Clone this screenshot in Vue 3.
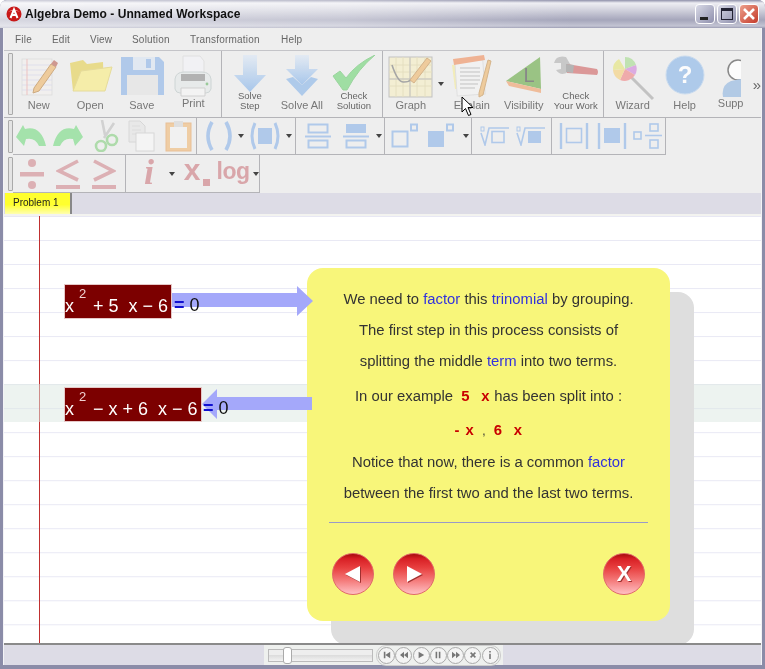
<script setup>
const transport = ['first', 'rew', 'play', 'pause', 'fwd', 'stop', 'info']
</script>

<template>
  <div class="window">
    <header class="titlebar">
      <svg class="app-logo" width="16" height="16" viewBox="0 0 16 16">
        <circle cx="8" cy="8" r="7.5" fill="#c81818" />
        <path d="M2 6 Q8 1 14 6 Q8 3.5 2 6Z" fill="#f08a8a" />
        <path d="M4.5 12 L8 3.5 L11.5 12 M6 9 H10" fill="none" stroke="#fff" stroke-width="2" />
      </svg>
      <span class="title">Algebra Demo - Unnamed Workspace</span>
      <div class="win-buttons">
        <div class="win-btn"><span class="min-mark"></span></div>
        <div class="win-btn"><span class="max-mark"></span></div>
        <div class="win-btn close">
          <svg width="14" height="14" viewBox="0 0 14 14"><path d="M2 2 L12 12 M12 2 L2 12" stroke="#fff" stroke-width="2.6" /></svg>
        </div>
      </div>
    </header>

    <div class="body">
      <nav class="menu">
        <span style="width:37px">File</span>
        <span style="width:38px">Edit</span>
        <span style="width:42px">View</span>
        <span style="width:58px">Solution</span>
        <span style="width:91px">Transformation</span>
        <span>Help</span>
      </nav>

      <!-- main toolbar -->
      <div class="bar bar-main">
        <i class="grip"></i>
        <div class="group g-file">
          <div class="tool">
            <svg width="42" height="42" viewBox="0 0 42 42">
              <rect x="4" y="4" width="30" height="36" fill="#f2f0ee" stroke="#ddd" />
              <path d="M4 10H34M4 15H34M4 20H34M4 25H34M4 30H34M4 35H34" stroke="#dcdcec" />
              <path d="M9 4V40" stroke="#eebbbb" />
              <path d="M16 33 L33 9 L38 12 L21 36 L15 38Z" fill="#eec58e" stroke="#c8a070" />
              <path d="M33 9 L38 12 L40 8 L36 5Z" fill="#c98a80" />
            </svg>
            <span>New</span>
          </div>
          <div class="tool">
            <svg width="46" height="42" viewBox="0 0 46 42">
              <path d="M3 8 L16 5 L20 9 L36 7 L37 36 L6 36Z" fill="#e8d87a" />
              <path d="M6 36 L14 16 L45 12 L38 36Z" fill="#f7ed9e" stroke="#e4d88c" />
            </svg>
            <span>Open</span>
          </div>
          <div class="tool">
            <svg width="46" height="42" viewBox="0 0 46 42">
              <path d="M2 2H40L45 7V40H2Z" fill="#a6c3ea" />
              <rect x="14" y="2" width="22" height="13" fill="#dfe8f2" />
              <rect x="27" y="4" width="5" height="9" fill="#a6c3ea" />
              <rect x="8" y="20" width="31" height="20" fill="#e6e6e6" />
            </svg>
            <span>Save</span>
          </div>
          <div class="tool">
            <svg width="42" height="42" viewBox="0 0 42 42">
              <path d="M11 1H28L32 6V18H11Z" fill="#f2f2f6" stroke="#ddd" />
              <path d="M3 24 Q4 17 12 17H30 Q38 17 39 24V34 Q38 38 34 38H8 Q4 38 3 34Z" fill="#e6eaea" stroke="#c8d0d0" />
              <rect x="9" y="19" width="24" height="7" fill="#a8a8a8" />
              <path d="M9 33H33V41H9Z" fill="#f4f4f4" stroke="#ccc" />
              <circle cx="35" cy="29" r="1.4" fill="#8cc48c" />
            </svg>
            <span class="up">Print</span>
          </div>
        </div>
        <div class="group g-solve">
          <div class="tool small">
            <svg width="34" height="38" viewBox="0 0 34 38">
              <defs><linearGradient id="blue" x1="0" y1="0" x2="0" y2="1"><stop offset="0" stop-color="#e2eaf4" /><stop offset="1" stop-color="#9cc0ea" /></linearGradient></defs>
              <path d="M10 0H24V20H33L17 37L1 20H10Z" fill="url(#blue)" />
            </svg>
            <span>Solve<br />Step</span>
          </div>
          <div class="tool">
            <svg width="34" height="41" viewBox="0 0 34 41">
              <path d="M10 0H24V14H33L17 30L1 14H10Z" fill="url(#blue)" />
              <path d="M8 22 L17 30 L26 22 L33 24 L17 41 L1 24Z" fill="#a4c4ea" />
            </svg>
            <span>Solve All</span>
          </div>
          <div class="tool small">
            <svg width="44" height="36" viewBox="0 0 44 36">
              <path d="M1 21 L8 16 L14 23 Q24 9 43 0 Q26 14 15 35 L11 35Z" fill="#92dc96" stroke="#8ccf90" />
            </svg>
            <span>Check<br />Solution</span>
          </div>
        </div>
        <div class="group g-view">
          <div class="tool">
            <svg width="46" height="44" viewBox="0 0 46 44">
              <rect x="1" y="2" width="43" height="40" fill="#f4efcf" stroke="#bbb" />
              <path d="M8 2V42M15 2V42M22 2V42M29 2V42M37 2V42M1 10H44M1 17H44M1 24H44M1 31H44" stroke="#e4dcb8" />
              <path d="M22 2V42M1 24H44" stroke="#bbb" />
              <path d="M4 10 Q10 28 16 27 Q21 27 24 24" fill="none" stroke="#999" stroke-width="1.6" />
              <path d="M22 25 L39 3 L43 6 L26 28Z" fill="#eec58e" stroke="#d0aa7a" />
            </svg>
            <span>Graph</span>
          </div>
          <b class="caret graph-caret"></b>
          <div class="tool">
            <svg width="42" height="44" viewBox="0 0 42 44">
              <path d="M1 10L8 9L10 34L4 34Z" fill="#f3ecb0" />
              <rect x="5" y="6" width="28" height="34" fill="#f2f2f2" stroke="#ddd" transform="rotate(-4 19 23)" />
              <path d="M2 4 L33 0 L34 5 L3 10Z" fill="#f0a884" />
              <path d="M9 13H29M9 17H29M9 21H29M9 25H29M9 29H27M9 33H24" stroke="#bbb" />
              <path d="M28 38 L37 5 L40 6 L32 40 L28 42Z" fill="#eec58e" stroke="#d0aa7a" />
            </svg>
            <span>Explain</span>
          </div>
          <div class="tool">
            <svg width="38" height="42" viewBox="0 0 38 42">
              <path d="M1 26 L35 2 L36 34Z" fill="#8cbc72" />
              <path d="M1 26 L36 34 L36 38 L4 31Z" fill="#f0b48c" />
              <text x="24" y="27" class="svg-l">L</text>
            </svg>
            <span>Visibility</span>
          </div>
          <div class="tool small">
            <svg width="46" height="28" viewBox="0 0 46 28">
              <path d="M13 2 Q3 0 1 8 L8 8 L8 14 L3 15 Q8 22 15 17 L20 14Z" fill="#c2c2c2" />
              <path d="M14 9 L44 14 Q46 17 44 20 L14 18Z" fill="#d88a8a" />
              <path d="M13 9 L21 10 L20 18 L13 17Z" fill="#aaa" />
            </svg>
            <span>Check<br />Your Work</span>
          </div>
        </div>
        <div class="group g-help">
          <div class="tool">
            <svg width="44" height="46" viewBox="0 0 44 46">
              <path d="M14 16 L42 44" stroke="#bbb" stroke-width="3" />
              <circle cx="14" cy="14" r="11" fill="#eee" />
              <path d="M14 14 L14 2 A12 12 0 0 1 25 10Z" fill="#b8e0a8" />
              <path d="M14 14 L25 10 A12 12 0 0 1 24 20Z" fill="#d8a0e0" />
              <path d="M14 14 L24 20 A12 12 0 0 1 9 25Z" fill="#f0a0a0" />
              <path d="M14 14 L9 25 A12 12 0 0 1 2 15Z" fill="#f4d898" />
              <path d="M14 14 L2 15 A12 12 0 0 1 8 4Z" fill="#e8e898" />
            </svg>
            <span>Wizard</span>
          </div>
          <div class="tool">
            <svg width="40" height="40" viewBox="0 0 40 40">
              <circle cx="20" cy="20" r="19" fill="#a4c4ea" stroke="#c4d8ee" />
              <text x="20" y="28" class="svg-q">?</text>
            </svg>
            <span>Help</span>
          </div>
          <div class="tool supp">
            <svg width="20" height="44" viewBox="0 0 20 44">
              <circle cx="17" cy="15" r="10" fill="#fff" stroke="#777" stroke-width="1.5" />
              <path d="M2 42 Q0 30 10 26 L20 24 V42Z" fill="#a8c4e4" />
            </svg>
            <span class="up">Supp</span>
          </div>
          <span class="more">»</span>
        </div>
      </div>

      <!-- transformation toolbar -->
      <div class="bar bar-tall">
        <i class="grip"></i>
        <div class="group g-edit">
          <div class="ico" style="width:36px">
            <svg width="32" height="22" viewBox="0 0 32 22"><path d="M1 12 L9 21 L11 14 Q20 12 24 21 H31 Q26 0 10 4 L8 0Z" fill="#98e0a0" /></svg>
          </div>
          <div class="ico" style="width:38px">
            <svg width="32" height="22" viewBox="0 0 32 22"><path d="M31 12 L23 21 L21 14 Q12 12 8 21 H1 Q6 0 22 4 L24 0Z" fill="#98e0a0" /></svg>
          </div>
          <div class="ico" style="width:36px">
            <svg width="30" height="32" viewBox="0 0 30 32">
              <path d="M12 0 L15 15 M24 3 L14 18" stroke="#ccc" stroke-width="2.6" />
              <circle cx="22" cy="20" r="5" fill="none" stroke="#a4d8a0" stroke-width="2.6" />
              <circle cx="11" cy="26" r="5" fill="none" stroke="#a4d8a0" stroke-width="2.6" />
            </svg>
          </div>
          <div class="ico" style="width:36px">
            <svg width="28" height="32" viewBox="0 0 28 32">
              <path d="M2 1H13L18 6V22H2Z" fill="#e8e8e8" stroke="#d4d4d4" />
              <path d="M5 6H13M5 10H14M5 14H14" stroke="#d8d8d8" />
              <rect x="9" y="13" width="18" height="18" fill="#f6f6f6" stroke="#d4d4d4" />
            </svg>
          </div>
          <div class="ico" style="width:38px">
            <svg width="27" height="32" viewBox="0 0 27 32">
              <rect x="1" y="3" width="25" height="28" fill="#f0c898" stroke="#e8b888" />
              <rect x="5" y="7" width="17" height="21" fill="#f2f2f2" />
              <rect x="9" y="1" width="9" height="6" fill="#ddd" />
            </svg>
          </div>
        </div>
        <div class="group g-paren">
          <div class="ico" style="width:37px">
            <svg width="28" height="30" viewBox="0 0 28 30">
              <path d="M7 1 Q-1 15 7 29 M21 1 Q29 15 21 29" fill="none" stroke="#a6c3ea" stroke-width="3.6" />
            </svg>
          </div>
          <b class="caret"></b>
          <div class="ico" style="width:40px">
            <svg width="32" height="28" viewBox="0 0 32 28">
              <path d="M6 1 Q0 14 6 27 M26 1 Q32 14 26 27" fill="none" stroke="#a6c3ea" stroke-width="3" />
              <rect x="9" y="6" width="14" height="16" fill="#a6c3ea" />
            </svg>
          </div>
          <b class="caret"></b>
        </div>
        <div class="group g-frac">
          <div class="ico" style="width:38px">
            <svg width="28" height="26" viewBox="0 0 28 26"><rect x="4.5" y="1.5" width="19" height="8" fill="none" stroke="#a6c3ea" stroke-width="2" /><rect x="4.5" y="17.5" width="19" height="7" fill="none" stroke="#a6c3ea" stroke-width="2" /><path d="M1 13.5H27" stroke="#a6c3ea" stroke-width="2" /></svg>
          </div>
          <div class="ico" style="width:38px">
            <svg width="28" height="26" viewBox="0 0 28 26"><rect x="4" y="1" width="20" height="9" fill="#a6c3ea" /><rect x="4.5" y="17.5" width="19" height="7" fill="none" stroke="#a6c3ea" stroke-width="2" /><path d="M1 13.5H27" stroke="#a6c3ea" stroke-width="2" /></svg>
          </div>
          <b class="caret"></b>
        </div>
        <div class="group g-pow">
          <div class="ico" style="width:36px">
            <svg width="28" height="26" viewBox="0 0 28 26"><rect x="1.5" y="8.5" width="15" height="15" fill="none" stroke="#a6c3ea" stroke-width="2" /><rect x="20" y="1.5" width="6" height="6" fill="none" stroke="#a6c3ea" stroke-width="2" /></svg>
          </div>
          <div class="ico" style="width:36px">
            <svg width="28" height="26" viewBox="0 0 28 26"><rect x="1" y="8" width="16" height="16" fill="#a6c3ea" /><rect x="20" y="1.5" width="6" height="6" fill="none" stroke="#a6c3ea" stroke-width="2" /></svg>
          </div>
          <b class="caret"></b>
        </div>
        <div class="group g-root">
          <div class="ico" style="width:36px">
            <svg width="30" height="20" viewBox="0 0 30 20"><path d="M1 7 L5 19 L9 2 H29" fill="none" stroke="#a6c3ea" stroke-width="1.6" /><rect x="12" y="5.5" width="12" height="11" fill="none" stroke="#a6c3ea" stroke-width="1.6" /><rect x="1" y="1" width="3" height="4" fill="none" stroke="#a6c3ea" /></svg>
          </div>
          <div class="ico" style="width:36px">
            <svg width="30" height="20" viewBox="0 0 30 20"><path d="M1 7 L5 19 L9 2 H29" fill="none" stroke="#a6c3ea" stroke-width="1.6" /><rect x="12" y="5" width="13" height="12" fill="#a6c3ea" /><rect x="1" y="1" width="3" height="4" fill="none" stroke="#a6c3ea" /></svg>
          </div>
        </div>
        <div class="group g-abs">
          <div class="ico" style="width:38px">
            <svg width="30" height="28" viewBox="0 0 30 28"><path d="M2 1V27M28 1V27" stroke="#a6c3ea" stroke-width="2.4" /><rect x="7.5" y="6.5" width="15" height="14" fill="none" stroke="#a6c3ea" stroke-width="1.6" /></svg>
          </div>
          <div class="ico" style="width:38px">
            <svg width="30" height="28" viewBox="0 0 30 28"><path d="M2 1V27M28 1V27" stroke="#a6c3ea" stroke-width="2.4" /><rect x="7" y="6" width="16" height="15" fill="#a6c3ea" /></svg>
          </div>
          <div class="ico" style="width:34px">
            <svg width="30" height="28" viewBox="0 0 30 28"><rect x="1" y="10" width="7" height="7" fill="none" stroke="#a6c3ea" stroke-width="1.6" /><rect x="17" y="2" width="8" height="7" fill="none" stroke="#a6c3ea" stroke-width="1.6" /><rect x="17" y="18" width="8" height="8" fill="none" stroke="#a6c3ea" stroke-width="1.6" /><path d="M12 13.5H29" stroke="#a6c3ea" stroke-width="1.6" /></svg>
          </div>
        </div>
      </div>

      <!-- operators toolbar -->
      <div class="bar bar-ops">
        <i class="grip"></i>
        <div class="group g-ops">
          <div class="ico" style="width:36px">
            <svg width="24" height="30" viewBox="0 0 24 30"><circle cx="12" cy="4" r="4" fill="#d9a6aa" /><rect y="13" width="24" height="4.5" fill="#d9a6aa" /><circle cx="12" cy="26" r="4" fill="#d9a6aa" /></svg>
          </div>
          <div class="ico" style="width:36px">
            <svg width="24" height="30" viewBox="0 0 24 30"><path d="M22 2 L3 12 L22 21" fill="none" stroke="#d9a6aa" stroke-width="3.6" /><rect y="26" width="24" height="4" fill="#d9a6aa" /></svg>
          </div>
          <div class="ico" style="width:36px">
            <svg width="24" height="30" viewBox="0 0 24 30"><path d="M2 2 L21 12 L2 21" fill="none" stroke="#d9a6aa" stroke-width="3.6" /><rect y="26" width="24" height="4" fill="#d9a6aa" /></svg>
          </div>
        </div>
        <div class="group g-func">
          <div class="ico glyph ital" style="width:38px">i</div>
          <b class="caret"></b>
          <div class="ico xsub" style="width:38px">x<i></i></div>
          <div class="ico glyph logword" style="width:38px">log</div>
          <b class="caret"></b>
        </div>
      </div>

      <div class="tabs">
        <div class="tab">Problem 1</div>
      </div>

      <main class="sheet">
        <div class="margin-line"></div>
        <div class="band"></div>

        <div class="eq eq-a"><span class="hl"><span class="v">x</span><sup>2</sup><em>+ 5&nbsp; x − 6</em></span></div>
        <div class="eq-rest rest-a"><b>=</b> 0</div>
        <div class="arrow arrow-right"></div>

        <div class="eq eq-b"><span class="hl"><span class="v">x</span><sup>2</sup><em>− x + 6&nbsp; x − 6</em></span></div>
        <div class="arrow arrow-left"></div>
        <div class="eq-rest rest-b"><b>=</b> 0</div>

        <div class="popup-shadow"></div>
        <section class="popup">
          <p>We need to <a>factor</a> this <a>trinomial</a> by grouping.</p>
          <p>The first step in this process consists of</p>
          <p>splitting the middle <a>term</a> into two terms.</p>
          <p class="p-ex">In our example &nbsp;<strong>5&nbsp; x</strong> has been split into :</p>
          <p class="p-terms"><strong>- x</strong> <small>,</small> <strong>6&nbsp; x</strong></p>
          <p>Notice that now, there is a common <a>factor</a></p>
          <p>between the first two and the last two terms.</p>
          <hr />
          <div class="actions">
            <div class="nav-left">
              <div class="round">
                <svg width="20" height="20" viewBox="0 0 20 20"><path d="M17 2V18L2 10Z" fill="#fff" /></svg>
              </div>
              <div class="round">
                <svg width="20" height="20" viewBox="0 0 20 20"><path d="M3 2V18L18 10Z" fill="#fff" /></svg>
              </div>
            </div>
            <div class="round round-x">X</div>
          </div>
        </section>
      </main>

      <footer class="status">
        <div class="player">
          <div class="slider"><span class="thumb"></span></div>
          <div class="controls">
            <span v-for="t in transport" :key="t" class="ctl">
              <svg width="8" height="8" viewBox="0 0 10 10" fill="#777">
                <path v-if="t === 'first'" d="M1 1H3V9H1ZM9 1V9L3 5Z" />
                <path v-else-if="t === 'rew'" d="M5 1V9L0 5ZM10 1V9L5 5Z" />
                <path v-else-if="t === 'play'" d="M2 1V9L9 5Z" />
                <path v-else-if="t === 'pause'" d="M2 1H4V9H2ZM6 1H8V9H6Z" />
                <path v-else-if="t === 'fwd'" d="M0 1V9L5 5ZM5 1V9L10 5Z" />
                <path v-else-if="t === 'stop'" d="M2 2L8 8M8 2L2 8" stroke="#777" stroke-width="2" />
                <path v-else d="M4 0H6V2H4ZM4 3.5H6V10H4Z" />
              </svg>
            </span>
          </div>
        </div>
      </footer>
    </div>

    <!-- mouse pointer caught in the capture -->
    <svg class="pointer" width="14" height="21" viewBox="0 0 14 21">
      <path d="M1 1V16L4.5 12.5L7.5 19.5L10 18.5L7 11.5H12Z" fill="#fff" stroke="#000" stroke-width="1" />
    </svg>
  </div>
</template>

<style>
html, body { margin: 0; background: #fff; overflow: hidden; }
</style>

<style scoped>
.window {
  position: relative;
  width: 765px;
  height: 669px;
  box-sizing: border-box;
  display: flex;
  flex-direction: column;
  font-family: "Liberation Sans", Arial, sans-serif;
  background: #8b8ca8;
  border-radius: 7px 7px 0 0;
  overflow: hidden;
  filter: blur(.3px);
}

/* title bar */
.titlebar {
  height: 28px;
  flex: none;
  display: flex;
  align-items: center;
  padding: 0 6px 0 6px;
  box-sizing: border-box;
  background:
    linear-gradient(90deg, rgba(255,255,255,.55), rgba(255,255,255,.35) 45%, rgba(255,255,255,0) 75%),
    linear-gradient(#8e8fa9 0, #eeeef3 3px, #d6d6e0 9px, #a5a6bb 20px, #c3c4d3 26px, #9a9bb2 28px);
}
.app-logo { flex: none; }
.title {
  margin-left: 3px;
  font: bold 12px "Liberation Sans", sans-serif;
  letter-spacing: .05px;
  color: #111;
}
.win-buttons { margin-left: auto; display: flex; gap: 2px; }
.win-btn {
  width: 18px;
  height: 18px;
  border: 1px solid #fff;
  border-radius: 4px;
  background: linear-gradient(135deg, #d8d9e6, #8f90ad);
  display: flex;
  align-items: center;
  justify-content: center;
  position: relative;
}
.min-mark { width: 8px; height: 3px; background: #222; margin-top: 9px; margin-right: 3px; }
.max-mark { width: 10px; height: 8px; border: 1px solid #223; border-top-width: 3px; }
.close { background: linear-gradient(135deg, #eda08c, #c43a2a); }

.body {
  flex: 1;
  min-height: 0;
  margin: 0 3px 4px 3px;
  display: flex;
  flex-direction: column;
  background: #eee;
  border-left: 1px solid #f3f3f6;
  border-right: 1px solid #f3f3f6;
}

.menu {
  height: 22px;
  flex: none;
  display: flex;
  align-items: center;
  padding-left: 11px;
  font-size: 10px;
  letter-spacing: .2px;
  color: #666;
  background: #eee;
  box-sizing: border-box;
}
.menu span { flex: none; }

/* toolbars */
.bar {
  display: flex;
  flex: none;
  background: #eee;
  box-sizing: border-box;
}
.bar svg { opacity: .85; }
.bar-main { height: 68px; border-top: 1px solid #c4c4c8; border-bottom: 1px solid #b4b4b8; }
.bar-tall { height: 37px; }
.bar-ops { height: 38px; }
.grip {
  flex: none;
  width: 3px;
  margin: 2px 0 2px 4px;
  background: #e4e4e4;
  border: 1px solid #aaa;
  border-radius: 1px;
}
.group {
  display: flex;
  align-items: center;
  box-sizing: border-box;
  border-right: 1px solid #b4b4b8;
  border-bottom: 1px solid #b4b4b8;
}
.bar-main .group { border-bottom: 0; }

.tool {
  flex: none;
  width: 52px;
  height: 66px;
  display: flex;
  flex-direction: column;
  align-items: center;
  font-size: 11px;
  color: #777;
  text-align: center;
  padding-top: 4px;
  box-sizing: border-box;
  position: relative;
}
.tool svg { flex: none; }
.tool > span {
  position: absolute;
  left: -6px;
  right: -6px;
  top: 48px;
  white-space: nowrap;
}
.tool > span.up { top: 46px; }
.tool.small > span { font-size: 9.5px; line-height: 9.5px; top: 40px; color: #666; }

.g-file { width: 209px; }
.g-file .tool { width: 51.5px; }
.g-solve { width: 161px; padding-left: 2px; }
.g-view { width: 221px; padding-left: 2px; }
.g-help { flex: 1; padding-left: 3px; border-right: 0; }
.g-help .supp { width: 32px; margin-left: 4px; }
.more { font-size: 15px; color: #666; margin-left: 6px; }

.caret {
  flex: none;
  width: 0;
  height: 0;
  margin: 0 1px;
  border: 3px solid transparent;
  border-top: 4px solid #444;
  border-bottom: 0;
}
.graph-caret { margin-right: 2px; }

.ico {
  flex: none;
  height: 100%;
  display: flex;
  align-items: center;
  justify-content: center;
}
.glyph { font-family: "Liberation Sans", sans-serif; }
.ital { font: italic bold 36px "Liberation Serif", serif; color: #d9a6aa; padding-bottom: 4px; box-sizing: border-box; }
.logword { font-size: 23px; font-weight: bold; color: #d9a6aa; letter-spacing: -.5px; padding-bottom: 5px; box-sizing: border-box; }
.xsub {
  font-size: 30px;
  font-weight: bold;
  color: #d9a6aa;
  padding-bottom: 8px;
  padding-right: 6px;
  box-sizing: border-box;
  position: relative;
}
.xsub i {
  position: absolute;
  right: 4px;
  bottom: 6px;
  width: 7px;
  height: 7px;
  background: #d9a6aa;
}

.g-edit { width: 184px; height: 37px; }
.g-paren { width: 99px; height: 37px; padding-left: 3px; }
.g-frac { width: 89px; height: 37px; padding-left: 3px; }
.g-pow { width: 87px; height: 37px; padding-left: 2px; }
.g-pow .caret { margin-left: 4px; }
.g-root { width: 80px; height: 37px; padding-left: 5px; }
.g-abs { width: 114px; height: 37px; padding-left: 3px; }
.g-ops { width: 113px; height: 38px; padding-left: 1px; }
.g-func { width: 134px; height: 38px; padding-left: 4px; }

/* tabs */
.tabs {
  flex: none;
  height: 23px;
  background: #dddce6;
  display: flex;
  align-items: flex-start;
  padding-left: 1px;
  box-sizing: border-box;
  border-bottom: 2px solid #f3f3f0;
}
.tab {
  width: 67px;
  height: 21px;
  box-sizing: border-box;
  border-right: 2px solid #888;
  background: linear-gradient(#ffff2e 55%, #ffffb0);
  font-size: 10px;
  color: #222;
  padding: 4px 0 0 8px;
}

/* work sheet */
.sheet {
  flex: 1;
  min-height: 0;
  position: relative;
  overflow: hidden;
  background:
    repeating-linear-gradient(#fff 0 23px, #e8e8f4 23px 25px) 0 1px / 100% 24.02px;
}
.margin-line {
  position: absolute;
  left: 35px;
  top: 0;
  bottom: 0;
  width: 1px;
  background: #c03030;
}
.band {
  position: absolute;
  left: 0;
  right: 0;
  top: 168px;
  height: 38px;
  background: rgba(220, 232, 226, .5);
}
.eq {
  position: absolute;
  left: 60px;
  height: 35px;
  color: #fff;
  background: #7c0000;
  font-size: 18px;
  white-space: nowrap;
  outline: 1px solid #e6c8c8;
  outline-offset: -1px;
}
.hl { position: relative; display: block; height: 100%; }
.hl .v { position: absolute; left: 1px; top: 12px; }
.hl sup { position: absolute; left: 15px; top: 2px; font-size: 13px; color: #f0d0d0; line-height: 15px; vertical-align: baseline; }
.hl em { position: absolute; left: 29px; top: 12px; font-style: normal; }
.eq-a { top: 68px; width: 108px; }
.eq-b { top: 171px; width: 138px; }
.eq-rest {
  position: absolute;
  font-size: 18px;
  color: #111;
  white-space: nowrap;
  z-index: 6;
}
.eq-rest b { color: #1010d0; font-weight: bold; }
.rest-a { left: 170px; top: 79px; }
.rest-b { left: 199px; top: 182px; }
.arrow { position: absolute; background: #a4a8fa; z-index: 5; }
.arrow-right {
  left: 168px;
  top: 70px;
  width: 141px;
  height: 30px;
  clip-path: polygon(0 7px, 125px 7px, 125px 0, 141px 15px, 125px 30px, 125px 21px, 0 21px);
}
.arrow-left {
  left: 198px;
  top: 173px;
  width: 110px;
  height: 30px;
  clip-path: polygon(0 15px, 15px 0, 15px 8px, 110px 8px, 110px 21px, 15px 21px, 15px 30px);
}

.popup-shadow {
  position: absolute;
  left: 327px;
  top: 76px;
  width: 363px;
  height: 353px;
  background: #dedede;
  border-radius: 16px;
}
.popup {
  position: absolute;
  left: 303px;
  top: 52px;
  width: 363px;
  height: 353px;
  box-sizing: border-box;
  z-index: 4;
  padding: 21px 22px 0;
  background: #f8f67a;
  border-radius: 16px;
  text-align: center;
  font-size: 14.85px;
  color: #333;
  display: flex;
  flex-direction: column;
}
.popup p { margin: 0; height: 31px; line-height: 20px; white-space: nowrap; }
.popup a { color: #3232dc; }
.popup strong { color: #c80000; font-weight: bold; word-spacing: 1px; letter-spacing: .5px; }
.popup small { font-size: 12px; margin: 0 4px; }
.p-ex { padding-top: 4px; height: 38px !important; box-sizing: border-box; }
.p-terms { height: 32px !important; }
.popup hr {
  width: 100%;
  margin: 8px 0 0;
  border: 0;
  height: 1px;
  background: #9a9ac8;
}
.actions {
  margin-top: 30px;
  padding: 0 3px;
  display: flex;
  justify-content: space-between;
}
.nav-left { display: flex; gap: 19px; }
.round {
  width: 42px;
  height: 42px;
  box-sizing: border-box;
  border-radius: 50%;
  display: flex;
  align-items: center;
  justify-content: center;
  border: 1px solid #e06868;
  background: linear-gradient(#a80a0e 0, #d82025 12%, #e84040 35%, #f47878 65%, #ffc0c4 100%);
}
.round svg { filter: drop-shadow(1px 1px 0 #a03030); }
.round-x {
  color: #fff;
  font-size: 22px;
  font-weight: bold;
  font-family: "Liberation Sans", sans-serif;
  text-shadow: 1px 1px 0 #a03030;
}

/* status */
.status {
  flex: none;
  height: 22px;
  background: #dddce6;
  display: flex;
  justify-content: center;
  box-sizing: border-box;
  border-top: 2px solid #8a8a8a;
}
.player {
  width: 239px;
  height: 100%;
  display: flex;
  align-items: center;
  background: #eef0ee;
  padding: 0 1px 0 4px;
  box-sizing: border-box;
  position: relative;
  left: 1px;
}
.slider {
  width: 103px;
  height: 11px;
  border: 1px solid #bbb;
  background: linear-gradient(#eee 45%, #ddd 50%, #f2f2f2);
  position: relative;
  flex: none;
}
.thumb {
  position: absolute;
  left: 14px;
  top: -3px;
  width: 7px;
  height: 15px;
  background: #fff;
  border: 1px solid #aaa;
  border-radius: 3px;
}
.controls {
  margin-left: 3px;
  display: flex;
  gap: .3px;
  padding: 1px 1px;
  border: 1px solid #ccc;
  border-radius: 10px;
}
.ctl {
  width: 15px;
  height: 15px;
  border: 1px solid #aaa;
  border-radius: 50%;
  background: #f4f4f4;
  display: flex;
  align-items: center;
  justify-content: center;
}
.pointer {
  position: absolute;
  left: 461px;
  top: 96px;
  z-index: 10;
}
.svg-l { font: 20px "Liberation Sans", sans-serif; fill: #777; text-anchor: middle; }
.svg-q { font: bold 24px "Liberation Sans", sans-serif; fill: #fff; text-anchor: middle; }
</style>
